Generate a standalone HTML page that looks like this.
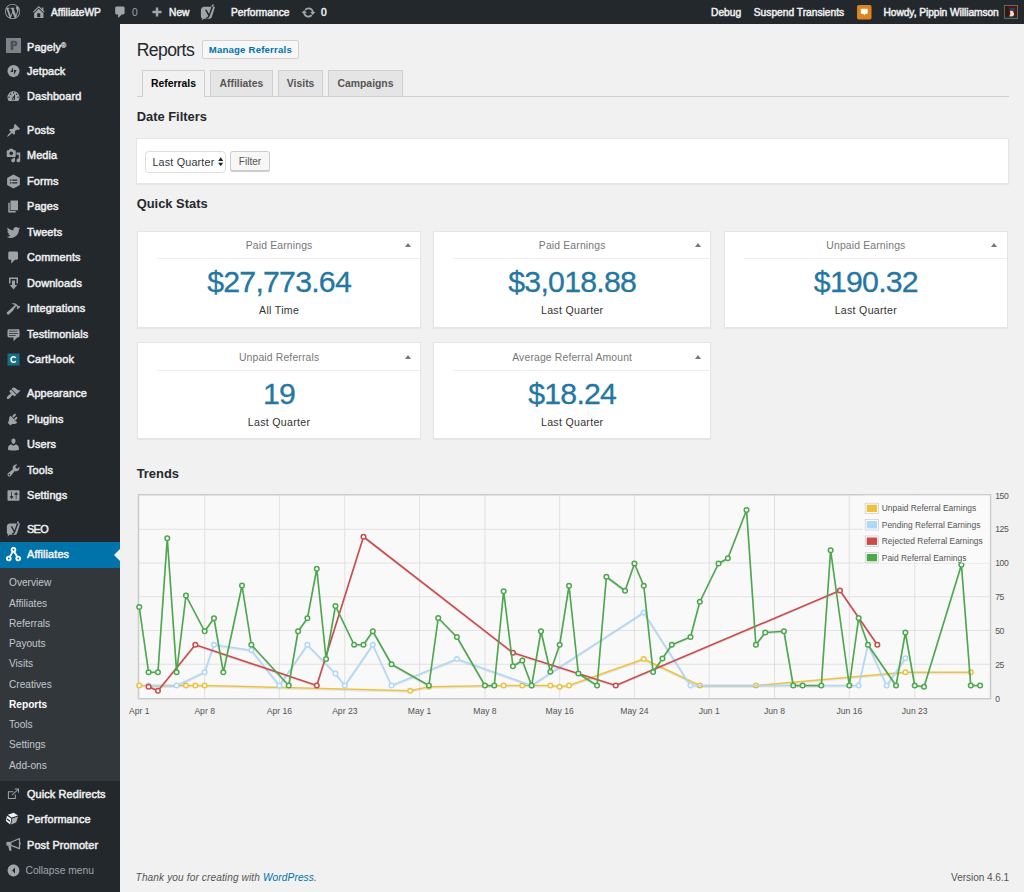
<!DOCTYPE html>
<html lang="en"><head><meta charset="utf-8"><title>Reports ‹ AffiliateWP — WordPress</title>
<style>
*{box-sizing:border-box;margin:0;padding:0}
html,body{width:1024px;height:892px;overflow:hidden;background:#f1f1f1}
body{font-family:"Liberation Sans",sans-serif;font-size:9.75px;color:#444;position:relative}
a{text-decoration:none;color:#0073aa}
.abs{position:absolute}
#bar{position:absolute;left:0;top:0;width:1024px;height:24px;background:#23282d;color:#eee;z-index:5}
#bar .t{position:absolute;top:0.5px;height:24px;line-height:24px;font-size:10.2px;font-weight:normal;-webkit-text-stroke:0.5px #eee;color:#eee;white-space:nowrap;letter-spacing:0.02px}
#bar .i{position:absolute}
#side{position:absolute;left:0;top:0;width:120px;height:892px;background:#23282d}
.mi{position:absolute;left:0;width:120px;height:25.5px}
.mi .ico{position:absolute;left:6px;top:5.2px}
.mi .lbl{position:absolute;left:27px;top:0;height:25.5px;line-height:25.5px;font-size:10.9px;font-weight:normal;-webkit-text-stroke:0.5px #eee;color:#eee;white-space:nowrap;letter-spacing:0.12px}
.mi.cur{background:#0073aa}
.mi.cur .lbl{color:#fff}
.mi.cur:after{content:"";position:absolute;right:0;top:6.75px;border:6px solid transparent;border-right-color:#f1f1f1}
#sub{position:absolute;left:0;top:567.75px;width:120px;height:213px;background:#32373c}
.si{position:absolute;left:9px;height:20.25px;line-height:20.25px;font-size:10.15px;color:#c3c8cc;white-space:nowrap}
.si.cur{color:#fff;font-weight:bold}
h1{position:absolute;left:136.7px;top:36px;height:28px;line-height:28px;font-size:17.6px;font-weight:400;color:#23282d;letter-spacing:-0.6px}
.btn-h{position:absolute;left:201.7px;top:39.9px;width:97.3px;height:18.8px;line-height:17px;border:1px solid #d2d2d2;background:#f7f7f7;border-radius:2px;text-align:center;font-size:9.6px;font-weight:bold;color:#0073aa;white-space:nowrap;letter-spacing:0.2px}
.tabline{position:absolute;left:136.5px;top:96px;width:872.5px;height:1px;background:#d0d0d0}
.tab{position:absolute;top:69.6px;height:26.4px;border:1px solid #d0d0d0;border-bottom:none;background:#e5e5e5;color:#555;font-weight:bold;font-size:10.4px;line-height:25px;text-align:center;white-space:nowrap}
.tab.act{background:#f1f1f1;color:#000;height:27.4px}
h2{position:absolute;left:136.7px;font-size:12.9px;font-weight:bold;color:#23282d;height:16px;line-height:16px;white-space:nowrap}
.box{position:absolute;background:#fff;border:1px solid #e5e5e5;box-shadow:0 1px 1px rgba(0,0,0,.04)}
.sel{position:absolute;left:145px;top:151px;width:81.2px;height:22px;border:1px solid #ddd;border-radius:4px;background:#fff;font-size:10.8px;line-height:20.2px;padding-left:6.4px;color:#32373c;white-space:nowrap;letter-spacing:0.17px}
.fbtn{position:absolute;left:230.4px;top:150.8px;width:39.2px;height:20.7px;border:1px solid #ccc;border-radius:2.5px;background:#f7f7f7;box-shadow:0 1px 0 #ccc;font-size:10.1px;line-height:19.2px;text-align:center;color:#555}
.card .hd{position:absolute;left:0;right:0;top:0;height:26.5px;line-height:26.4px;text-align:center;font-size:10.4px;color:#777;letter-spacing:0.15px}
.card .ln{position:absolute;left:19px;right:0;top:24.9px;height:1px;background:#eee}
.card .arr{position:absolute;right:9.5px;top:9.7px;width:0;height:0;border-left:3px solid transparent;border-right:3px solid transparent;border-bottom:4.5px solid #72777c}
.card .num{position:absolute;left:0;right:0;top:30.7px;height:36px;line-height:36px;text-align:center;font-size:30.3px;color:#2477a2;-webkit-text-stroke:0.3px #2477a2;letter-spacing:-0.78px;white-space:nowrap}
.card .sub{position:absolute;left:0;right:0;top:69.9px;height:14px;line-height:14px;text-align:center;font-size:10.6px;color:#333;letter-spacing:0.3px}
.lg{font-family:"Liberation Sans",sans-serif;font-size:8.42px;fill:#545454}
.ax{font-family:"Liberation Sans",sans-serif;font-size:8.6px;fill:#545454}
.foot{position:absolute;top:870.8px;height:14px;line-height:14px;font-size:10.1px;color:#555;white-space:nowrap;letter-spacing:0.12px}
</style></head>
<body>
<div id="side">
<div class="mi" style="top:33.0px"><div class="ico"><svg width="15" height="15" viewBox="0 0 20 20" style="display:block;"><rect x="0" y="0" width="20" height="20" fill="#7e8388"/><path fill="#4b5056" fill-rule="evenodd" d="M6.200 3.800h5.200c2.300 0 3.700 1.400 3.700 3.500s-1.400 3.600-3.700 3.600H9.700V16H6.200zM9.700 6.200v2.400h1.200c.8 0 1.200-.4 1.200-1.200s-.4-1.200-1.200-1.200z"/></svg></div><div class="lbl">Pagely<span style="font-size:7px;vertical-align:2.500px;-webkit-text-stroke:0.2px #eee">®</span></div></div>
<div class="mi" style="top:58.5px"><div class="ico"><svg width="15" height="15" viewBox="0 0 20 20" style="display:block;"><circle cx="10" cy="9.400" r="8.100" fill="#9ea3a8"/><path fill="#23282d" d="M9.400 4.200v6.600H6zM10.600 14.600V8h3.400z"/></svg></div><div class="lbl">Jetpack</div></div>
<div class="mi" style="top:84.0px"><div class="ico"><svg width="15" height="15" viewBox="0 0 20 20" style="display:block;"><path fill="#9ea3a8" fill-rule="evenodd" d="M3.76 16h12.48c1.1-1.37 1.76-3.11 1.76-5 0-4.42-3.58-8-8-8s-8 3.58-8 8c0 1.89.66 3.63 1.76 5zM10 4c.55 0 1 .45 1 1s-.45 1-1 1-1-.45-1-1 .45-1 1-1zM6 6c.55 0 1 .45 1 1s-.45 1-1 1-1-.45-1-1 .45-1 1-1zm8 0c.55 0 1 .45 1 1s-.45 1-1 1-1-.45-1-1 .45-1 1-1zm-5.370 5.550L12 7v6c0 1.1-.9 2-2 2s-2-.9-2-2c0-.57.24-1.08.63-1.450zM4 10c.55 0 1 .45 1 1s-.45 1-1 1-1-.45-1-1 .45-1 1-1zm12 0c.55 0 1 .45 1 1s-.45 1-1 1-1-.45-1-1 .45-1 1-1zm-5 3c0-.55-.45-1-1-1s-1 .45-1 1 .45 1 1 1 1-.45 1-1z"/></svg></div><div class="lbl">Dashboard</div></div>
<div class="mi" style="top:117.75px"><div class="ico"><svg width="15" height="15" viewBox="0 0 20 20" style="display:block;"><path fill="#9ea3a8" fill-rule="evenodd" d="M10.44 3.02l1.82-1.82 6.36 6.35-1.83 1.82c-1.05-.68-2.48-.57-3.41.36l-.75.75c-.92.93-1.04 2.35-.35 3.41l-1.83 1.82-2.41-2.41-2.8 2.79c-.42.42-3.38 2.71-3.8 2.29s1.86-3.39 2.28-3.81l2.79-2.79L4.1 9.36l1.83-1.82c1.05.69 2.48.57 3.4-.36l.75-.75c.93-.92 1.05-2.35.36-3.41z"/></svg></div><div class="lbl">Posts</div></div>
<div class="mi" style="top:143.25px"><div class="ico"><svg width="15" height="15" viewBox="0 0 20 20" style="display:block;"><path fill="#9ea3a8" fill-rule="evenodd" d="M13 11V4c0-.55-.45-1-1-1h-1.67L9 1H5L3.67 3H2c-.55 0-1 .45-1 1v7c0 .55.45 1 1 1h10c.55 0 1-.45 1-1zM7 4.5c1.38 0 2.5 1.12 2.5 2.5S8.38 9.5 7 9.5 4.5 8.38 4.5 7 5.62 4.5 7 4.5zM14 6h5v10.5c0 1.38-1.12 2.5-2.5 2.5S14 17.88 14 16.5s1.12-2.5 2.5-2.5c.17 0 .34.02.5.05V9h-3V6zm-4 8.05V13h2v3.5c0 1.38-1.12 2.5-2.5 2.5S7 17.88 7 16.5 8.12 14 9.5 14c.17 0 .34.02.5.05z"/></svg></div><div class="lbl">Media</div></div>
<div class="mi" style="top:168.75px"><div class="ico"><svg width="15" height="15" viewBox="0 0 20 20" style="display:block;"><path fill="#9ea3a8" d="M10 0.600l8.500 4.700v9.400L10 19.400l-8.500-4.700V5.300z"/><path fill="#23282d" d="M5 7.300h2.200v1.700H5zM8.300 7.300h6.700v1.700H8.300zM5 11.100h2.200v1.700H5zM8.300 11.100h6.700v1.700H8.300z"/></svg></div><div class="lbl">Forms</div></div>
<div class="mi" style="top:194.25px"><div class="ico"><svg width="15" height="15" viewBox="0 0 20 20" style="display:block;"><path fill="#9ea3a8" fill-rule="evenodd" d="M6 15V2h10v13H6zm-1 1h8v2H3V5h2v11z"/></svg></div><div class="lbl">Pages</div></div>
<div class="mi" style="top:219.75px"><div class="ico"><svg width="15" height="15" viewBox="0 0 20 20" style="display:block;"><path fill="#9ea3a8" fill-rule="evenodd" d="M18.94 4.46c-.49.73-1.11 1.38-1.83 1.9.01.15.01.31.01.47 0 4.85-3.69 10.44-10.43 10.44-2.07 0-4-.61-5.63-1.65.29.03.58.05.88.05 1.72 0 3.3-.59 4.55-1.57-1.6-.03-2.95-1.09-3.42-2.55.22.04.45.07.69.07.33 0 .66-.05.96-.13-1.67-.34-2.94-1.82-2.94-3.6v-.04c.5.27 1.06.44 1.66.46-.98-.66-1.63-1.78-1.63-3.06 0-.67.18-1.3.5-1.84 1.81 2.22 4.51 3.68 7.56 3.83-.06-.27-.1-.55-.1-.84 0-2.02 1.65-3.66 3.67-3.66 1.06 0 2.01.44 2.68 1.16.83-.17 1.62-.47 2.33-.89-.28.85-.86 1.57-1.62 2.02.75-.08 1.45-.28 2.110-.570z"/></svg></div><div class="lbl">Tweets</div></div>
<div class="mi" style="top:245.25px"><div class="ico"><svg width="15" height="15" viewBox="0 0 20 20" style="display:block;"><path fill="#9ea3a8" fill-rule="evenodd" d="M5 2h9c1.1 0 2 .9 2 2v7c0 1.1-.9 2-2 2h-2l-5 5v-5H5c-1.1 0-2-.9-2-2V4c0-1.1.9-2 2-2z"/></svg></div><div class="lbl">Comments</div></div>
<div class="mi" style="top:270.75px"><div class="ico"><svg width="15" height="15" viewBox="0 0 20 20" style="display:block;"><path fill="#9ea3a8" fill-rule="evenodd" d="M14.01 4v6h2V2H4v8h2.010V4h8zm-2 2v6h3l-5 6-5-6h3V6h4z"/></svg></div><div class="lbl">Downloads</div></div>
<div class="mi" style="top:296.25px"><div class="ico"><svg width="15" height="15" viewBox="0 0 20 20" style="display:block;"><path fill="#9ea3a8" fill-rule="evenodd" d="M17.7 6.32l1.41 1.42-3.47 3.41-1.42-1.42.84-.82c-.32-.76-.81-1.57-1.51-2.31l-4.61 6.59-5.26 4.7c-.39.39-1.02.39-1.42 0l-1.2-1.21c-.39-.39-.39-1.02 0-1.41l10.97-9.92c-1.37-.86-3.21-1.46-5.67-1.48 2.7-.82 4.95-.93 6.58-.3 1.7.66 2.82 2.2 3.910 3.580z"/></svg></div><div class="lbl">Integrations</div></div>
<div class="mi" style="top:321.75px"><div class="ico"><svg width="15" height="15" viewBox="0 0 20 20" style="display:block;"><path fill="#9ea3a8" fill-rule="evenodd" d="M4 3h12c.55 0 1.02.2 1.41.59S18 4.45 18 5v7c0 .55-.2 1.02-.59 1.41S16.55 14 16 14h-1l-5 5v-5H4c-.55 0-1.02-.2-1.41-.59S2 12.55 2 12V5c0-.55.2-1.02.59-1.41S3.450 3 4 3zm11 2H4v1h11V5zm1 3H4v1h12V8zm-3 3H4v1h9v-1z"/></svg></div><div class="lbl">Testimonials</div></div>
<div class="mi" style="top:347.25px"><div class="ico"><svg width="15" height="15" viewBox="0 0 20 20" style="display:block;"><rect x="2" y="2" width="16" height="16" fill="#16708a"/><path fill="none" stroke="#fff" stroke-width="2" d="M13 7.800c-.6-1-1.600-1.600-2.800-1.600-2 0-3.400 1.600-3.400 3.800s1.400 3.800 3.400 3.800c1.200 0 2.200-.6 2.800-1.600"/></svg></div><div class="lbl">CartHook</div></div>
<div class="mi" style="top:381.0px"><div class="ico"><svg width="15" height="15" viewBox="0 0 20 20" style="display:block;"><path fill="#9ea3a8" fill-rule="evenodd" d="M14.48 11.06L7.41 3.99l1.5-1.5c.5-.56 2.3-.47 3.51.32 1.21.8 1.43 1.28 2.91 2.1 1.18.64 2.45 1.26 4.45.85zm-.71.71L6.7 4.7 4.93 6.47c-.39.39-.39 1.02 0 1.41l1.06 1.06c.39.39.39 1.03 0 1.42-.6.6-1.43 1.11-2.21 1.69-.35.26-.7.53-1.01.84C1.43 14.23.4 16.08 1.4 17.07c.99 1 2.84-.03 4.18-1.36.31-.31.58-.66.85-1.02.57-.78 1.08-1.61 1.69-2.21.39-.39 1.02-.39 1.41 0l1.06 1.06c.39.39 1.02.39 1.41 0z"/></svg></div><div class="lbl">Appearance</div></div>
<div class="mi" style="top:406.5px"><div class="ico"><svg width="15" height="15" viewBox="0 0 20 20" style="display:block;"><path fill="#9ea3a8" fill-rule="evenodd" d="M13.11 4.36L9.87 7.6 8 5.73l3.24-3.24c.35-.34 1.05-.2 1.56.32.52.51.66 1.21.31 1.55zm-8 1.77l.91-1.12 9.01 9.01-1.19.84c-.71.71-2.63 1.16-3.82 1.16H8.1L6.8 17.32c-.41.4-1.07.4-1.48 0L2.68 14.68c-.4-.41-.4-1.07 0-1.48L4 11.89V9.97c0-1.29.4-3.13 1.11-3.84zm9.95 2.38l-3.24 3.24-1.87-1.87 3.24-3.24c.34-.35 1.04-.21 1.55.31.52.51.66 1.21.32 1.56z"/></svg></div><div class="lbl">Plugins</div></div>
<div class="mi" style="top:432.0px"><div class="ico"><svg width="15" height="15" viewBox="0 0 20 20" style="display:block;"><path fill="#9ea3a8" fill-rule="evenodd" d="M10 9.25c-2.27 0-2.73-3.44-2.73-3.44C7 4.02 7.82 2 9.97 2c2.16 0 2.98 2.02 2.71 3.81 0 0-.41 3.44-2.68 3.44zm0 2.57L12.72 10c2.39 0 4.52 2.33 4.52 4.53v2.49s-3.65 1.13-7.24 1.13c-3.65 0-7.24-1.13-7.24-1.13v-2.49c0-2.25 1.94-4.48 4.47-4.48z"/></svg></div><div class="lbl">Users</div></div>
<div class="mi" style="top:457.5px"><div class="ico"><svg width="15" height="15" viewBox="0 0 20 20" style="display:block;"><path fill="#9ea3a8" fill-rule="evenodd" d="M16.68 9.77c-1.34 1.34-3.3 1.67-4.95.99l-5.41 6.52c-.99.99-2.59.99-3.58 0s-.99-2.59 0-3.57l6.52-5.42c-.68-1.65-.35-3.61.99-4.95 1.28-1.28 3.12-1.62 4.72-1.06l-2.89 2.89 2.82 2.82 2.86-2.87c.53 1.58.18 3.39-1.08 4.65zM3.81 16.21c.4.39 1.04.39 1.43 0 .4-.4.4-1.04 0-1.43-.39-.4-1.03-.4-1.43 0-.39.39-.39 1.03 0 1.43z"/></svg></div><div class="lbl">Tools</div></div>
<div class="mi" style="top:483.0px"><div class="ico"><svg width="15" height="15" viewBox="0 0 20 20" style="display:block;"><path fill="#9ea3a8" fill-rule="evenodd" d="M18 16V4c0-.55-.45-1-1-1H3c-.55 0-1 .45-1 1v12c0 .55.45 1 1 1h14c.55 0 1-.45 1-1zM8 11h1c.55 0 1 .45 1 1s-.45 1-1 1H8v1.5c0 .28-.22.5-.5.5s-.5-.22-.5-.5V13H6c-.55 0-1-.45-1-1s.45-1 1-1h1V5.500c0-.28.22-.5.5-.5s.5.22.5.5V11zm5-2h-1c-.55 0-1-.45-1-1s.45-1 1-1h1V5.500c0-.28.22-.5.5-.5s.5.22.5.5V7h1c.55 0 1 .45 1 1s-.45 1-1 1h-1v5.500c0 .28-.22.5-.5.5s-.5-.22-.5-.5V9z"/></svg></div><div class="lbl">Settings</div></div>
<div class="mi" style="top:516.75px"><div class="ico"><svg width="16" height="16" viewBox="0 0 20 20" style="display:block;margin-top:-0.800px"><path fill="#9ea3a8" d="M5 3.200h12.600l-3.400 11.200c-.5 1.900-1.400 2.900-3.100 2.900H4.600l-2.800 2.100.9-2.500c-1.100-.4-1.600-1.300-1.600-2.400V7c0-2.200 1.700-3.800 3.900-3.800z"/><path fill="#23282d" d="M13.500 3.200h2l-3.900 10.700c-.9 2.500-2.100 3.300-4.300 3.400v-1.600c1.300-.2 2-.7 2.400-1.900L5.800 6.700h2l2.800 5.200z"/><path fill="#9ea3a8" d="M13.500 3.200l1-2.900 1.900.6-.9 2.300z"/></svg></div><div class="lbl"><span style="letter-spacing:-0.700px">SEO</span></div></div>
<div class="mi cur" style="top:542.25px"><div class="ico"><svg width="15" height="15" viewBox="0 0 20 20" style="display:block;"><g fill="none" stroke="#fff" stroke-width="2.500"><path d="M10 4.500L4 15M10 4.500L16 15"/><circle cx="10" cy="3.600" r="2.500" fill="#0073aa"/><circle cx="3.700" cy="15.300" r="2.500" fill="#0073aa"/><circle cx="16.300" cy="15.300" r="2.500" fill="#0073aa"/></g></svg></div><div class="lbl">Affiliates</div></div>
<div id="sub">
<div class="si" style="top:5.55px">Overview</div>
<div class="si" style="top:25.80px">Affiliates</div>
<div class="si" style="top:46.05px">Referrals</div>
<div class="si" style="top:66.30px">Payouts</div>
<div class="si" style="top:86.55px">Visits</div>
<div class="si" style="top:106.80px">Creatives</div>
<div class="si cur" style="top:127.05px">Reports</div>
<div class="si" style="top:147.30px">Tools</div>
<div class="si" style="top:167.55px">Settings</div>
<div class="si" style="top:187.80px">Add-ons</div>
</div>
<div class="mi" style="top:781.5px"><div class="ico"><svg width="15" height="15" viewBox="0 0 20 20" style="display:block;"><g fill="none" stroke="#9ea3a8" stroke-width="1.350"><path d="M10 6.400H3.200V15.300H12.400V10"/><path d="M7.800 11L16.600 2.700M11.600 2.600h5.100v5.100"/></g></svg></div><div class="lbl">Quick Redirects</div></div>
<div class="mi" style="top:807.0px"><div class="ico"><svg width="16" height="16" viewBox="0 0 20 20" style="display:block;margin-left:-1.400px;margin-top:-0.600px"><path fill="#f3f3f3" d="M3.500 3.300L10.800 1 16.300 4.300 8.300 6.800z"/><path fill="#ededed" d="M2.600 4.600L7.900 8 6.500 15.600 1 11.200z"/><path fill="#23282d" d="M2.700 8.100L6.300 10.700 6 12.300 2.400 9.600z"/><path fill="#a9adb1" d="M9.100 8L16.300 5.700 13.900 13 7.700 15.500z"/></svg></div><div class="lbl">Performance</div></div>
<div class="mi" style="top:832.5px"><div class="ico"><svg width="15" height="15" viewBox="0 0 20 20" style="display:block;"><path fill="none" stroke="#9ea3a8" stroke-width="1.500" stroke-linejoin="round" d="M6.500 5.600L18 0.800V14.200L6.500 9.800z"/><path fill="#9ea3a8" d="M0.600 5.200H6.500V10.200H0.600z"/><path fill="#9ea3a8" d="M2.800 10h3.600l.9 6.200c.1.500-.2.800-.7.800H5.200c-.5 0-.8-.3-.9-.8z"/><path fill="#9ea3a8" d="M18 5.800h.9c.4 0 .7.300.7.700v1.800c0 .4-.3.700-.7.700H18z"/></svg></div><div class="lbl">Post Promoter</div></div>
<div class="mi" style="top:858.0px"><div class="ico" style="left:5.900px;top:4.800px"><svg width="15" height="15" viewBox="0 0 20 20" style="display:block;"><path fill="#a0a5aa" fill-rule="evenodd" d="M10 2.160c4.330 0 7.840 3.510 7.840 7.840s-3.510 7.840-7.840 7.840S2.160 14.330 2.160 10 5.670 2.160 10 2.160zm2 11.720V6.120L8.180 10z"/></svg></div><div class="lbl" style="left:25.500px;font-weight:normal;color:#a0a5aa;font-size:10.35px;-webkit-text-stroke:0;letter-spacing:-0.05px">Collapse menu</div></div>
</div>
<div id="bar">
<div class="i" style="left:5px;top:3.650px"><svg width="15.2" height="15.2" viewBox="0 0 20 20" style="display:block;"><path fill="#a0a5aa" fill-rule="evenodd" d="M20 10c0-5.510-4.490-10-10-10C4.480 0 0 4.490 0 10c0 5.520 4.480 10 10 10 5.510 0 10-4.480 10-10zM7.780 15.370L4.370 6.220c.55-.02 1.17-.08 1.17-.08.5-.06.44-1.130-.06-1.110 0 0-1.450.110-2.370.110-.18 0-.37 0-.58-.01C4.120 2.690 6.870 1.110 10 1.110c2.330 0 4.450.87 6.050 2.340-.68-.11-1.650.39-1.650 1.580 0 .74.45 1.360.9 2.100.35.61.55 1.360.55 2.460 0 1.490-1.4 5-1.4 5l-3.030-8.370c.54-.02.82-.17.82-.17.5-.05.44-1.250-.06-1.220 0 0-1.440.12-2.380.12-.87 0-2.330-.12-2.330-.12-.5-.03-.56 1.200-.06 1.220l.92.08 1.260 3.410zM17.410 10c.24-.64.74-1.870.43-4.250.7 1.290 1.050 2.710 1.050 4.250 0 3.290-1.730 6.240-4.400 7.780.97-2.590 1.940-5.200 2.920-7.780zM6.100 18.090C3.120 16.650 1.110 13.530 1.110 10c0-1.300.23-2.480.72-3.590C3.250 10.300 4.670 14.200 6.100 18.090zm4.030-6.630l2.580 6.980c-.86.29-1.760.45-2.710.45-.79 0-1.570-.11-2.290-.33.81-2.380 1.620-4.740 2.420-7.100z"/></svg></div>
<div class="i" style="left:30.600px;top:4.100px"><svg width="15.5" height="15.5" viewBox="0 0 20 20" style="display:block;"><path fill="#a0a5aa" fill-rule="evenodd" d="M16 8.5l1.530 1.530-1.060 1.060L10 4.620l-6.470 6.470-1.060-1.060L10 2.500l4 4v-2h2v4zm-6-2.460l6 5.990V18H4v-5.970zM12 17v-5H8v5h4z"/></svg></div>
<div class="t" style="left:51px">AffiliateWP</div>
<div class="i" style="left:112.900px;top:4.900px"><svg width="14.5" height="14.5" viewBox="0 0 20 20" style="display:block;"><path fill="#a0a5aa" fill-rule="evenodd" d="M5 2h9c1.1 0 2 .9 2 2v7c0 1.1-.9 2-2 2h-2l-5 5v-5H5c-1.1 0-2-.9-2-2V4c0-1.1.9-2 2-2z"/></svg></div>
<div class="t" style="left:132px;color:#a0a5aa;-webkit-text-stroke:0">0</div>
<div class="i" style="left:150px;top:5.2px"><svg width="14" height="14" viewBox="0 0 20 20" style="display:block;"><path fill="#a0a5aa" fill-rule="evenodd" d="M16.500 8.200v3.600h-4.700v4.700H8.200v-4.700H3.500V8.200h4.700V3.500h3.600v4.700z"/></svg></div>
<div class="t" style="left:169px">New</div>
<div class="i" style="left:200px;top:3.5px"><svg width="17" height="17" viewBox="0 0 20 20" style="display:block;"><path fill="#a0a5aa" d="M5 3.200h12.600l-3.400 11.200c-.5 1.900-1.400 2.900-3.100 2.900H4.600l-2.800 2.100.9-2.500c-1.100-.4-1.600-1.300-1.600-2.400V7c0-2.200 1.700-3.800 3.900-3.800z"/><path fill="#23282d" d="M13.500 3.200h2l-3.900 10.700c-.9 2.500-2.100 3.300-4.300 3.400v-1.600c1.300-.2 2-.7 2.400-1.900L5.800 6.700h2l2.800 5.200z"/><path fill="#a0a5aa" d="M13.500 3.200l1-2.900 1.900.6-.9 2.300z"/></svg></div>
<div class="t" style="left:231px">Performance</div>
<div class="i" style="left:301px;top:4.5px"><svg width="15" height="15" viewBox="0 0 20 20" style="display:block;"><path fill="#a0a5aa" fill-rule="evenodd" d="M10.2 3.280c3.530 0 6.430 2.610 6.920 6h2.080l-3.5 4-3.5-4h2.320c-.45-1.970-2.210-3.450-4.320-3.450-1.450 0-2.730.71-3.540 1.780L4.950 5.660C6.230 4.200 8.110 3.280 10.200 3.280zm-.4 13.440c-3.520 0-6.430-2.610-6.920-6H.8l3.5-4c1.170 1.330 2.330 2.670 3.500 4H5.480c.45 1.970 2.210 3.450 4.320 3.450 1.450 0 2.730-.71 3.540-1.780l1.710 1.950c-1.280 1.460-3.150 2.380-5.250 2.380z"/></svg></div>
<div class="t" style="left:321px">0</div>
<div class="t" style="left:711px">Debug</div>
<div class="t" style="left:753.8px">Suspend Transients</div>
<div class="i" style="left:857.3px;top:5px"><svg width="14.5" height="14.5" viewBox="0 0 20 20" style="display:block;"><rect x="0" y="0" width="20" height="20" rx="2.500" fill="#dd8420"/><path fill="#fff" d="M5.300 5h9.400v7.200h-3.400L10 14.400l-1.300-2.200H5.300z"/></svg></div>
<div class="t" style="left:883.5px;letter-spacing:-0.05px">Howdy, Pippin Williamson</div>
<div class="i" style="left:1004px;top:5px"><svg width="14" height="14" viewBox="0 0 20 20" style="display:block;"><rect x="0" y="0" width="20" height="20" fill="#666c72"/><rect x="1.400" y="1.400" width="17.200" height="17.200" fill="#571708"/><rect x="1.400" y="1.400" width="4.600" height="17.200" fill="#2c1c0e"/><ellipse cx="11.800" cy="6.600" rx="4" ry="2.700" fill="#1d4676"/><path fill="#f1dcd2" d="M8.600 8.200l4.200.4 1.800 4.600-2 3.600H7.400l1.600-4z"/><rect x="1.400" y="16.400" width="17.200" height="2.200" fill="#1b3528"/></svg></div>
</div>
<h1>Reports</h1>
<a class="btn-h">Manage Referrals</a>
<div class="tabline"></div>
<div class="tab act" style="left:142.4px;width:62.2px">Referrals</div>
<div class="tab" style="left:210.2px;width:62.5px">Affiliates</div>
<div class="tab" style="left:278.3px;width:44.7px">Visits</div>
<div class="tab" style="left:328.3px;width:74.4px">Campaigns</div>
<h2 style="top:108.600px">Date Filters</h2>
<div class="box" style="left:136px;top:138px;width:873px;height:46px"></div>
<div class="sel">Last Quarter<svg width="5.400" height="9.600" viewBox="0 0 6 10" style="position:absolute;right:2.200px;top:5.200px"><path fill="#222" d="M3 0l2.800 4H.2zM3 10L.2 6h5.600z"/></svg></div>
<div class="fbtn">Filter</div>
<h2 style="top:195.500px">Quick Stats</h2>
<div class="box card" style="left:136.8px;top:231.4px;width:284.6px;height:96.4px"><div style="position:absolute;left:0;right:0;top:1px;height:90px"><div class="hd">Paid Earnings</div><div class="arr"></div><div class="ln"></div><div class="num">$27,773.64</div><div class="sub">All Time</div></div></div>
<div class="box card" style="left:433.2px;top:231.4px;width:278px;height:96.4px"><div style="position:absolute;left:0;right:0;top:1px;height:90px"><div class="hd">Paid Earnings</div><div class="arr"></div><div class="ln"></div><div class="num">$3,018.88</div><div class="sub">Last Quarter</div></div></div>
<div class="box card" style="left:723.8px;top:231.4px;width:284.2px;height:96.4px"><div style="position:absolute;left:0;right:0;top:1px;height:90px"><div class="hd">Unpaid Earnings</div><div class="arr"></div><div class="ln"></div><div class="num">$190.32</div><div class="sub">Last Quarter</div></div></div>
<div class="box card" style="left:136.8px;top:342.4px;width:284.6px;height:96.6px"><div style="position:absolute;left:0;right:0;top:1.6px;height:90px"><div class="hd">Unpaid Referrals</div><div class="arr"></div><div class="ln"></div><div class="num">19</div><div class="sub">Last Quarter</div></div></div>
<div class="box card" style="left:433.2px;top:342.4px;width:278px;height:96.6px"><div style="position:absolute;left:0;right:0;top:1.6px;height:90px"><div class="hd">Average Referral Amount</div><div class="arr"></div><div class="ln"></div><div class="num">$18.24</div><div class="sub">Last Quarter</div></div></div>
<h2 style="top:465.500px">Trends</h2>
<svg class="chart" width="1024" height="892" viewBox="0 0 1024 892" style="position:absolute;left:0;top:0;overflow:visible">
<rect x="138.5" y="494.75" width="852.0" height="204.0" fill="#f9f9f9"/>
<line x1="138.5" y1="664.25" x2="990.5" y2="664.25" stroke="#d9d9d9" stroke-width="0.75"/>
<line x1="138.5" y1="630.5" x2="990.5" y2="630.5" stroke="#d9d9d9" stroke-width="0.75"/>
<line x1="138.5" y1="596.75" x2="990.5" y2="596.75" stroke="#d9d9d9" stroke-width="0.75"/>
<line x1="138.5" y1="563.0" x2="990.5" y2="563.0" stroke="#d9d9d9" stroke-width="0.75"/>
<line x1="138.5" y1="529.25" x2="990.5" y2="529.25" stroke="#d9d9d9" stroke-width="0.75"/>
<line x1="204.65" y1="494.75" x2="204.65" y2="698.75" stroke="#d9d9d9" stroke-width="0.75"/>
<line x1="279.39" y1="494.75" x2="279.39" y2="698.75" stroke="#d9d9d9" stroke-width="0.75"/>
<line x1="344.8" y1="494.75" x2="344.8" y2="698.75" stroke="#d9d9d9" stroke-width="0.75"/>
<line x1="419.54" y1="494.75" x2="419.54" y2="698.75" stroke="#d9d9d9" stroke-width="0.75"/>
<line x1="484.94" y1="494.75" x2="484.94" y2="698.75" stroke="#d9d9d9" stroke-width="0.75"/>
<line x1="559.68" y1="494.75" x2="559.68" y2="698.75" stroke="#d9d9d9" stroke-width="0.75"/>
<line x1="634.43" y1="494.75" x2="634.43" y2="698.75" stroke="#d9d9d9" stroke-width="0.75"/>
<line x1="709.17" y1="494.75" x2="709.17" y2="698.75" stroke="#d9d9d9" stroke-width="0.75"/>
<line x1="774.57" y1="494.75" x2="774.57" y2="698.75" stroke="#d9d9d9" stroke-width="0.75"/>
<line x1="849.32" y1="494.75" x2="849.32" y2="698.75" stroke="#d9d9d9" stroke-width="0.75"/>
<line x1="914.72" y1="494.75" x2="914.72" y2="698.75" stroke="#d9d9d9" stroke-width="0.75"/>
<rect x="138.5" y="494.75" width="852.0" height="204.0" fill="none" stroke="#cbcbcb" stroke-width="1.5"/>
<polyline points="139.25,686.7 185.97,686.7 195.31,686.7 204.65,686.7 410.2,691.95 428.88,687.95 503.63,686.7 522.31,686.7 531.66,686.7 550.34,686.7 559.68,687.95 569.03,686.7 643.77,660.2 699.83,686.7 755.89,686.7 905.38,673.45 970.78,673.45" fill="none" stroke="#000" stroke-opacity="0.08" stroke-width="1.6" stroke-linejoin="round"/>
<polyline points="139.25,685.5 185.97,685.5 195.31,685.5 204.65,685.5 410.2,690.75 428.88,686.75 503.63,685.5 522.31,685.5 531.66,685.5 550.34,685.5 559.68,686.75 569.03,685.5 643.77,659.0 699.83,685.5 755.89,685.5 905.38,672.25 970.78,672.25" fill="none" stroke="#edc240" stroke-width="1.6" stroke-linejoin="round"/>
<circle cx="139.25" cy="685.5" r="2.3" fill="#fff" stroke="#edc240" stroke-width="1.5"/>
<circle cx="185.97" cy="685.5" r="2.3" fill="#fff" stroke="#edc240" stroke-width="1.5"/>
<circle cx="195.31" cy="685.5" r="2.3" fill="#fff" stroke="#edc240" stroke-width="1.5"/>
<circle cx="204.65" cy="685.5" r="2.3" fill="#fff" stroke="#edc240" stroke-width="1.5"/>
<circle cx="410.2" cy="690.75" r="2.3" fill="#fff" stroke="#edc240" stroke-width="1.5"/>
<circle cx="428.88" cy="686.75" r="2.3" fill="#fff" stroke="#edc240" stroke-width="1.5"/>
<circle cx="503.63" cy="685.5" r="2.3" fill="#fff" stroke="#edc240" stroke-width="1.5"/>
<circle cx="522.31" cy="685.5" r="2.3" fill="#fff" stroke="#edc240" stroke-width="1.5"/>
<circle cx="531.66" cy="685.5" r="2.3" fill="#fff" stroke="#edc240" stroke-width="1.5"/>
<circle cx="550.34" cy="685.5" r="2.3" fill="#fff" stroke="#edc240" stroke-width="1.5"/>
<circle cx="559.68" cy="686.75" r="2.3" fill="#fff" stroke="#edc240" stroke-width="1.5"/>
<circle cx="569.03" cy="685.5" r="2.3" fill="#fff" stroke="#edc240" stroke-width="1.5"/>
<circle cx="643.77" cy="659.0" r="2.3" fill="#fff" stroke="#edc240" stroke-width="1.5"/>
<circle cx="699.83" cy="685.5" r="2.3" fill="#fff" stroke="#edc240" stroke-width="1.5"/>
<circle cx="755.89" cy="685.5" r="2.3" fill="#fff" stroke="#edc240" stroke-width="1.5"/>
<circle cx="905.38" cy="672.25" r="2.3" fill="#fff" stroke="#edc240" stroke-width="1.5"/>
<circle cx="970.78" cy="672.25" r="2.3" fill="#fff" stroke="#edc240" stroke-width="1.5"/>
<polyline points="148.59,686.7 176.62,686.7 204.65,673.45 213.99,645.95 251.37,651.45 279.39,686.7 307.42,645.95 335.45,674.7 344.8,686.7 372.82,645.95 391.51,686.7 456.91,660.2 531.66,686.7 643.77,613.7 690.49,686.7 858.66,686.7 868.0,645.95 886.69,686.7 905.38,659.45" fill="none" stroke="#000" stroke-opacity="0.08" stroke-width="1.6" stroke-linejoin="round"/>
<polyline points="148.59,685.5 176.62,685.5 204.65,672.25 213.99,644.75 251.37,650.25 279.39,685.5 307.42,644.75 335.45,673.5 344.8,685.5 372.82,644.75 391.51,685.5 456.91,659.0 531.66,685.5 643.77,612.5 690.49,685.5 858.66,685.5 868.0,644.75 886.69,685.5 905.38,658.25" fill="none" stroke="#afd8f8" stroke-width="1.6" stroke-linejoin="round"/>
<circle cx="148.59" cy="685.5" r="2.3" fill="#fff" stroke="#afd8f8" stroke-width="1.5"/>
<circle cx="176.62" cy="685.5" r="2.3" fill="#fff" stroke="#afd8f8" stroke-width="1.5"/>
<circle cx="204.65" cy="672.25" r="2.3" fill="#fff" stroke="#afd8f8" stroke-width="1.5"/>
<circle cx="213.99" cy="644.75" r="2.3" fill="#fff" stroke="#afd8f8" stroke-width="1.5"/>
<circle cx="251.37" cy="650.25" r="2.3" fill="#fff" stroke="#afd8f8" stroke-width="1.5"/>
<circle cx="279.39" cy="685.5" r="2.3" fill="#fff" stroke="#afd8f8" stroke-width="1.5"/>
<circle cx="307.42" cy="644.75" r="2.3" fill="#fff" stroke="#afd8f8" stroke-width="1.5"/>
<circle cx="335.45" cy="673.5" r="2.3" fill="#fff" stroke="#afd8f8" stroke-width="1.5"/>
<circle cx="344.8" cy="685.5" r="2.3" fill="#fff" stroke="#afd8f8" stroke-width="1.5"/>
<circle cx="372.82" cy="644.75" r="2.3" fill="#fff" stroke="#afd8f8" stroke-width="1.5"/>
<circle cx="391.51" cy="685.5" r="2.3" fill="#fff" stroke="#afd8f8" stroke-width="1.5"/>
<circle cx="456.91" cy="659.0" r="2.3" fill="#fff" stroke="#afd8f8" stroke-width="1.5"/>
<circle cx="531.66" cy="685.5" r="2.3" fill="#fff" stroke="#afd8f8" stroke-width="1.5"/>
<circle cx="643.77" cy="612.5" r="2.3" fill="#fff" stroke="#afd8f8" stroke-width="1.5"/>
<circle cx="690.49" cy="685.5" r="2.3" fill="#fff" stroke="#afd8f8" stroke-width="1.5"/>
<circle cx="858.66" cy="685.5" r="2.3" fill="#fff" stroke="#afd8f8" stroke-width="1.5"/>
<circle cx="868.0" cy="644.75" r="2.3" fill="#fff" stroke="#afd8f8" stroke-width="1.5"/>
<circle cx="886.69" cy="685.5" r="2.3" fill="#fff" stroke="#afd8f8" stroke-width="1.5"/>
<circle cx="905.38" cy="658.25" r="2.3" fill="#fff" stroke="#afd8f8" stroke-width="1.5"/>
<polyline points="148.59,687.95 157.94,691.95 195.31,645.95 316.77,686.7 363.48,537.95 512.97,653.95 615.74,686.7 839.98,591.7 877.35,645.95" fill="none" stroke="#000" stroke-opacity="0.08" stroke-width="1.6" stroke-linejoin="round"/>
<polyline points="148.59,686.75 157.94,690.75 195.31,644.75 316.77,685.5 363.48,536.75 512.97,652.75 615.74,685.5 839.98,590.5 877.35,644.75" fill="none" stroke="#cb4b4b" stroke-width="1.6" stroke-linejoin="round"/>
<circle cx="148.59" cy="686.75" r="2.3" fill="#fff" stroke="#cb4b4b" stroke-width="1.5"/>
<circle cx="157.94" cy="690.75" r="2.3" fill="#fff" stroke="#cb4b4b" stroke-width="1.5"/>
<circle cx="195.31" cy="644.75" r="2.3" fill="#fff" stroke="#cb4b4b" stroke-width="1.5"/>
<circle cx="316.77" cy="685.5" r="2.3" fill="#fff" stroke="#cb4b4b" stroke-width="1.5"/>
<circle cx="363.48" cy="536.75" r="2.3" fill="#fff" stroke="#cb4b4b" stroke-width="1.5"/>
<circle cx="512.97" cy="652.75" r="2.3" fill="#fff" stroke="#cb4b4b" stroke-width="1.5"/>
<circle cx="615.74" cy="685.5" r="2.3" fill="#fff" stroke="#cb4b4b" stroke-width="1.5"/>
<circle cx="839.98" cy="590.5" r="2.3" fill="#fff" stroke="#cb4b4b" stroke-width="1.5"/>
<circle cx="877.35" cy="644.75" r="2.3" fill="#fff" stroke="#cb4b4b" stroke-width="1.5"/>
<polyline points="139.25,608.2 148.59,673.45 157.94,673.45 167.28,539.45 176.62,673.45 185.97,596.7 204.65,632.45 213.99,619.45 223.34,673.45 242.02,586.7 251.37,645.95 288.74,686.7 298.08,632.45 307.42,619.45 316.77,569.95 326.11,660.2 335.45,607.2 354.14,645.95 363.48,645.95 372.82,632.45 391.51,665.45 428.88,686.7 438.23,619.2 456.91,638.2 484.94,686.7 494.28,686.7 503.63,592.45 512.97,667.45 522.31,661.7 531.66,686.7 541.0,632.45 550.34,672.95 559.68,645.95 569.03,586.95 578.37,674.7 597.06,686.7 606.4,577.95 625.09,591.95 634.43,564.7 643.77,586.95 653.12,673.2 662.46,659.7 671.8,645.95 690.49,638.2 699.83,602.95 718.52,564.7 727.86,559.45 746.54,511.2 755.89,645.95 765.23,633.7 783.92,632.45 793.26,686.7 802.6,686.7 821.29,686.7 830.63,551.45 849.32,686.7 858.66,619.2 868.0,645.95 896.03,686.7 905.38,633.7 914.72,686.7 924.06,687.95 961.43,565.95 970.78,686.7 980.12,686.7" fill="none" stroke="#000" stroke-opacity="0.08" stroke-width="1.6" stroke-linejoin="round"/>
<polyline points="139.25,607.0 148.59,672.25 157.94,672.25 167.28,538.25 176.62,672.25 185.97,595.5 204.65,631.25 213.99,618.25 223.34,672.25 242.02,585.5 251.37,644.75 288.74,685.5 298.08,631.25 307.42,618.25 316.77,568.75 326.11,659.0 335.45,606.0 354.14,644.75 363.48,644.75 372.82,631.25 391.51,664.25 428.88,685.5 438.23,618.0 456.91,637.0 484.94,685.5 494.28,685.5 503.63,591.25 512.97,666.25 522.31,660.5 531.66,685.5 541.0,631.25 550.34,671.75 559.68,644.75 569.03,585.75 578.37,673.5 597.06,685.5 606.4,576.75 625.09,590.75 634.43,563.5 643.77,585.75 653.12,672.0 662.46,658.5 671.8,644.75 690.49,637.0 699.83,601.75 718.52,563.5 727.86,558.25 746.54,510.0 755.89,644.75 765.23,632.5 783.92,631.25 793.26,685.5 802.6,685.5 821.29,685.5 830.63,550.25 849.32,685.5 858.66,618.0 868.0,644.75 896.03,685.5 905.38,632.5 914.72,685.5 924.06,686.75 961.43,564.75 970.78,685.5 980.12,685.5" fill="none" stroke="#4da74d" stroke-width="1.6" stroke-linejoin="round"/>
<circle cx="139.25" cy="607.0" r="2.3" fill="#fff" stroke="#4da74d" stroke-width="1.5"/>
<circle cx="148.59" cy="672.25" r="2.3" fill="#fff" stroke="#4da74d" stroke-width="1.5"/>
<circle cx="157.94" cy="672.25" r="2.3" fill="#fff" stroke="#4da74d" stroke-width="1.5"/>
<circle cx="167.28" cy="538.25" r="2.3" fill="#fff" stroke="#4da74d" stroke-width="1.5"/>
<circle cx="176.62" cy="672.25" r="2.3" fill="#fff" stroke="#4da74d" stroke-width="1.5"/>
<circle cx="185.97" cy="595.5" r="2.3" fill="#fff" stroke="#4da74d" stroke-width="1.5"/>
<circle cx="204.65" cy="631.25" r="2.3" fill="#fff" stroke="#4da74d" stroke-width="1.5"/>
<circle cx="213.99" cy="618.25" r="2.3" fill="#fff" stroke="#4da74d" stroke-width="1.5"/>
<circle cx="223.34" cy="672.25" r="2.3" fill="#fff" stroke="#4da74d" stroke-width="1.5"/>
<circle cx="242.02" cy="585.5" r="2.3" fill="#fff" stroke="#4da74d" stroke-width="1.5"/>
<circle cx="251.37" cy="644.75" r="2.3" fill="#fff" stroke="#4da74d" stroke-width="1.5"/>
<circle cx="288.74" cy="685.5" r="2.3" fill="#fff" stroke="#4da74d" stroke-width="1.5"/>
<circle cx="298.08" cy="631.25" r="2.3" fill="#fff" stroke="#4da74d" stroke-width="1.5"/>
<circle cx="307.42" cy="618.25" r="2.3" fill="#fff" stroke="#4da74d" stroke-width="1.5"/>
<circle cx="316.77" cy="568.75" r="2.3" fill="#fff" stroke="#4da74d" stroke-width="1.5"/>
<circle cx="326.11" cy="659.0" r="2.3" fill="#fff" stroke="#4da74d" stroke-width="1.5"/>
<circle cx="335.45" cy="606.0" r="2.3" fill="#fff" stroke="#4da74d" stroke-width="1.5"/>
<circle cx="354.14" cy="644.75" r="2.3" fill="#fff" stroke="#4da74d" stroke-width="1.5"/>
<circle cx="363.48" cy="644.75" r="2.3" fill="#fff" stroke="#4da74d" stroke-width="1.5"/>
<circle cx="372.82" cy="631.25" r="2.3" fill="#fff" stroke="#4da74d" stroke-width="1.5"/>
<circle cx="391.51" cy="664.25" r="2.3" fill="#fff" stroke="#4da74d" stroke-width="1.5"/>
<circle cx="428.88" cy="685.5" r="2.3" fill="#fff" stroke="#4da74d" stroke-width="1.5"/>
<circle cx="438.23" cy="618.0" r="2.3" fill="#fff" stroke="#4da74d" stroke-width="1.5"/>
<circle cx="456.91" cy="637.0" r="2.3" fill="#fff" stroke="#4da74d" stroke-width="1.5"/>
<circle cx="484.94" cy="685.5" r="2.3" fill="#fff" stroke="#4da74d" stroke-width="1.5"/>
<circle cx="494.28" cy="685.5" r="2.3" fill="#fff" stroke="#4da74d" stroke-width="1.5"/>
<circle cx="503.63" cy="591.25" r="2.3" fill="#fff" stroke="#4da74d" stroke-width="1.5"/>
<circle cx="512.97" cy="666.25" r="2.3" fill="#fff" stroke="#4da74d" stroke-width="1.5"/>
<circle cx="522.31" cy="660.5" r="2.3" fill="#fff" stroke="#4da74d" stroke-width="1.5"/>
<circle cx="531.66" cy="685.5" r="2.3" fill="#fff" stroke="#4da74d" stroke-width="1.5"/>
<circle cx="541.0" cy="631.25" r="2.3" fill="#fff" stroke="#4da74d" stroke-width="1.5"/>
<circle cx="550.34" cy="671.75" r="2.3" fill="#fff" stroke="#4da74d" stroke-width="1.5"/>
<circle cx="559.68" cy="644.75" r="2.3" fill="#fff" stroke="#4da74d" stroke-width="1.5"/>
<circle cx="569.03" cy="585.75" r="2.3" fill="#fff" stroke="#4da74d" stroke-width="1.5"/>
<circle cx="578.37" cy="673.5" r="2.3" fill="#fff" stroke="#4da74d" stroke-width="1.5"/>
<circle cx="597.06" cy="685.5" r="2.3" fill="#fff" stroke="#4da74d" stroke-width="1.5"/>
<circle cx="606.4" cy="576.75" r="2.3" fill="#fff" stroke="#4da74d" stroke-width="1.5"/>
<circle cx="625.09" cy="590.75" r="2.3" fill="#fff" stroke="#4da74d" stroke-width="1.5"/>
<circle cx="634.43" cy="563.5" r="2.3" fill="#fff" stroke="#4da74d" stroke-width="1.5"/>
<circle cx="643.77" cy="585.75" r="2.3" fill="#fff" stroke="#4da74d" stroke-width="1.5"/>
<circle cx="653.12" cy="672.0" r="2.3" fill="#fff" stroke="#4da74d" stroke-width="1.5"/>
<circle cx="662.46" cy="658.5" r="2.3" fill="#fff" stroke="#4da74d" stroke-width="1.5"/>
<circle cx="671.8" cy="644.75" r="2.3" fill="#fff" stroke="#4da74d" stroke-width="1.5"/>
<circle cx="690.49" cy="637.0" r="2.3" fill="#fff" stroke="#4da74d" stroke-width="1.5"/>
<circle cx="699.83" cy="601.75" r="2.3" fill="#fff" stroke="#4da74d" stroke-width="1.5"/>
<circle cx="718.52" cy="563.5" r="2.3" fill="#fff" stroke="#4da74d" stroke-width="1.5"/>
<circle cx="727.86" cy="558.25" r="2.3" fill="#fff" stroke="#4da74d" stroke-width="1.5"/>
<circle cx="746.54" cy="510.0" r="2.3" fill="#fff" stroke="#4da74d" stroke-width="1.5"/>
<circle cx="755.89" cy="644.75" r="2.3" fill="#fff" stroke="#4da74d" stroke-width="1.5"/>
<circle cx="765.23" cy="632.5" r="2.3" fill="#fff" stroke="#4da74d" stroke-width="1.5"/>
<circle cx="783.92" cy="631.25" r="2.3" fill="#fff" stroke="#4da74d" stroke-width="1.5"/>
<circle cx="793.26" cy="685.5" r="2.3" fill="#fff" stroke="#4da74d" stroke-width="1.5"/>
<circle cx="802.6" cy="685.5" r="2.3" fill="#fff" stroke="#4da74d" stroke-width="1.5"/>
<circle cx="821.29" cy="685.5" r="2.3" fill="#fff" stroke="#4da74d" stroke-width="1.5"/>
<circle cx="830.63" cy="550.25" r="2.3" fill="#fff" stroke="#4da74d" stroke-width="1.5"/>
<circle cx="849.32" cy="685.5" r="2.3" fill="#fff" stroke="#4da74d" stroke-width="1.5"/>
<circle cx="858.66" cy="618.0" r="2.3" fill="#fff" stroke="#4da74d" stroke-width="1.5"/>
<circle cx="868.0" cy="644.75" r="2.3" fill="#fff" stroke="#4da74d" stroke-width="1.5"/>
<circle cx="896.03" cy="685.5" r="2.3" fill="#fff" stroke="#4da74d" stroke-width="1.5"/>
<circle cx="905.38" cy="632.5" r="2.3" fill="#fff" stroke="#4da74d" stroke-width="1.5"/>
<circle cx="914.72" cy="685.5" r="2.3" fill="#fff" stroke="#4da74d" stroke-width="1.5"/>
<circle cx="924.06" cy="686.75" r="2.3" fill="#fff" stroke="#4da74d" stroke-width="1.5"/>
<circle cx="961.43" cy="564.75" r="2.3" fill="#fff" stroke="#4da74d" stroke-width="1.5"/>
<circle cx="970.78" cy="685.5" r="2.3" fill="#fff" stroke="#4da74d" stroke-width="1.5"/>
<circle cx="980.12" cy="685.5" r="2.3" fill="#fff" stroke="#4da74d" stroke-width="1.5"/>
<rect x="863" y="495.5" width="126.7" height="67.5" fill="#fafafa" fill-opacity="0.85"/>
<rect x="865.2" y="503.20" width="13.4" height="10.4" fill="#fff" stroke="#ccc" stroke-width="0.75"/>
<rect x="866.7" y="504.70" width="10.4" height="7.4" fill="#edc240"/>
<text x="881.8" y="511.30" class="lg">Unpaid Referral Earnings</text>
<rect x="865.2" y="519.60" width="13.4" height="10.4" fill="#fff" stroke="#ccc" stroke-width="0.75"/>
<rect x="866.7" y="521.10" width="10.4" height="7.4" fill="#afd8f8"/>
<text x="881.8" y="527.70" class="lg">Pending Referral Earnings</text>
<rect x="865.2" y="536.00" width="13.4" height="10.4" fill="#fff" stroke="#ccc" stroke-width="0.75"/>
<rect x="866.7" y="537.50" width="10.4" height="7.4" fill="#cb4b4b"/>
<text x="881.8" y="544.10" class="lg">Rejected Referral Earnings</text>
<rect x="865.2" y="552.40" width="13.4" height="10.4" fill="#fff" stroke="#ccc" stroke-width="0.75"/>
<rect x="866.7" y="553.90" width="10.4" height="7.4" fill="#4da74d"/>
<text x="881.8" y="560.50" class="lg">Paid Referral Earnings</text>
<text x="139.25" y="714.3" text-anchor="middle" class="ax">Apr 1</text>
<text x="204.65" y="714.3" text-anchor="middle" class="ax">Apr 8</text>
<text x="279.39" y="714.3" text-anchor="middle" class="ax">Apr 16</text>
<text x="344.8" y="714.3" text-anchor="middle" class="ax">Apr 23</text>
<text x="419.54" y="714.3" text-anchor="middle" class="ax">May 1</text>
<text x="484.94" y="714.3" text-anchor="middle" class="ax">May 8</text>
<text x="559.68" y="714.3" text-anchor="middle" class="ax">May 16</text>
<text x="634.43" y="714.3" text-anchor="middle" class="ax">May 24</text>
<text x="709.17" y="714.3" text-anchor="middle" class="ax">Jun 1</text>
<text x="774.57" y="714.3" text-anchor="middle" class="ax">Jun 8</text>
<text x="849.32" y="714.3" text-anchor="middle" class="ax">Jun 16</text>
<text x="914.72" y="714.3" text-anchor="middle" class="ax">Jun 23</text>
<text x="995.2" y="701.95" class="ax" letter-spacing="-0.4">0</text>
<text x="995.2" y="668.20" class="ax" letter-spacing="-0.4">25</text>
<text x="995.2" y="634.45" class="ax" letter-spacing="-0.4">50</text>
<text x="995.2" y="600.45" class="ax" letter-spacing="-0.4">75</text>
<text x="995.2" y="566.20" class="ax" letter-spacing="-0.4">100</text>
<text x="995.2" y="532.45" class="ax" letter-spacing="-0.4">125</text>
<text x="995.2" y="498.70" class="ax" letter-spacing="-0.4">150</text>
</svg>
<div class="foot" style="left:135.600px;font-style:italic">Thank you for creating with <a>WordPress</a>.</div>
<div class="foot" style="right:15px;letter-spacing:-0.08px">Version 4.6.1</div>
</body></html>
